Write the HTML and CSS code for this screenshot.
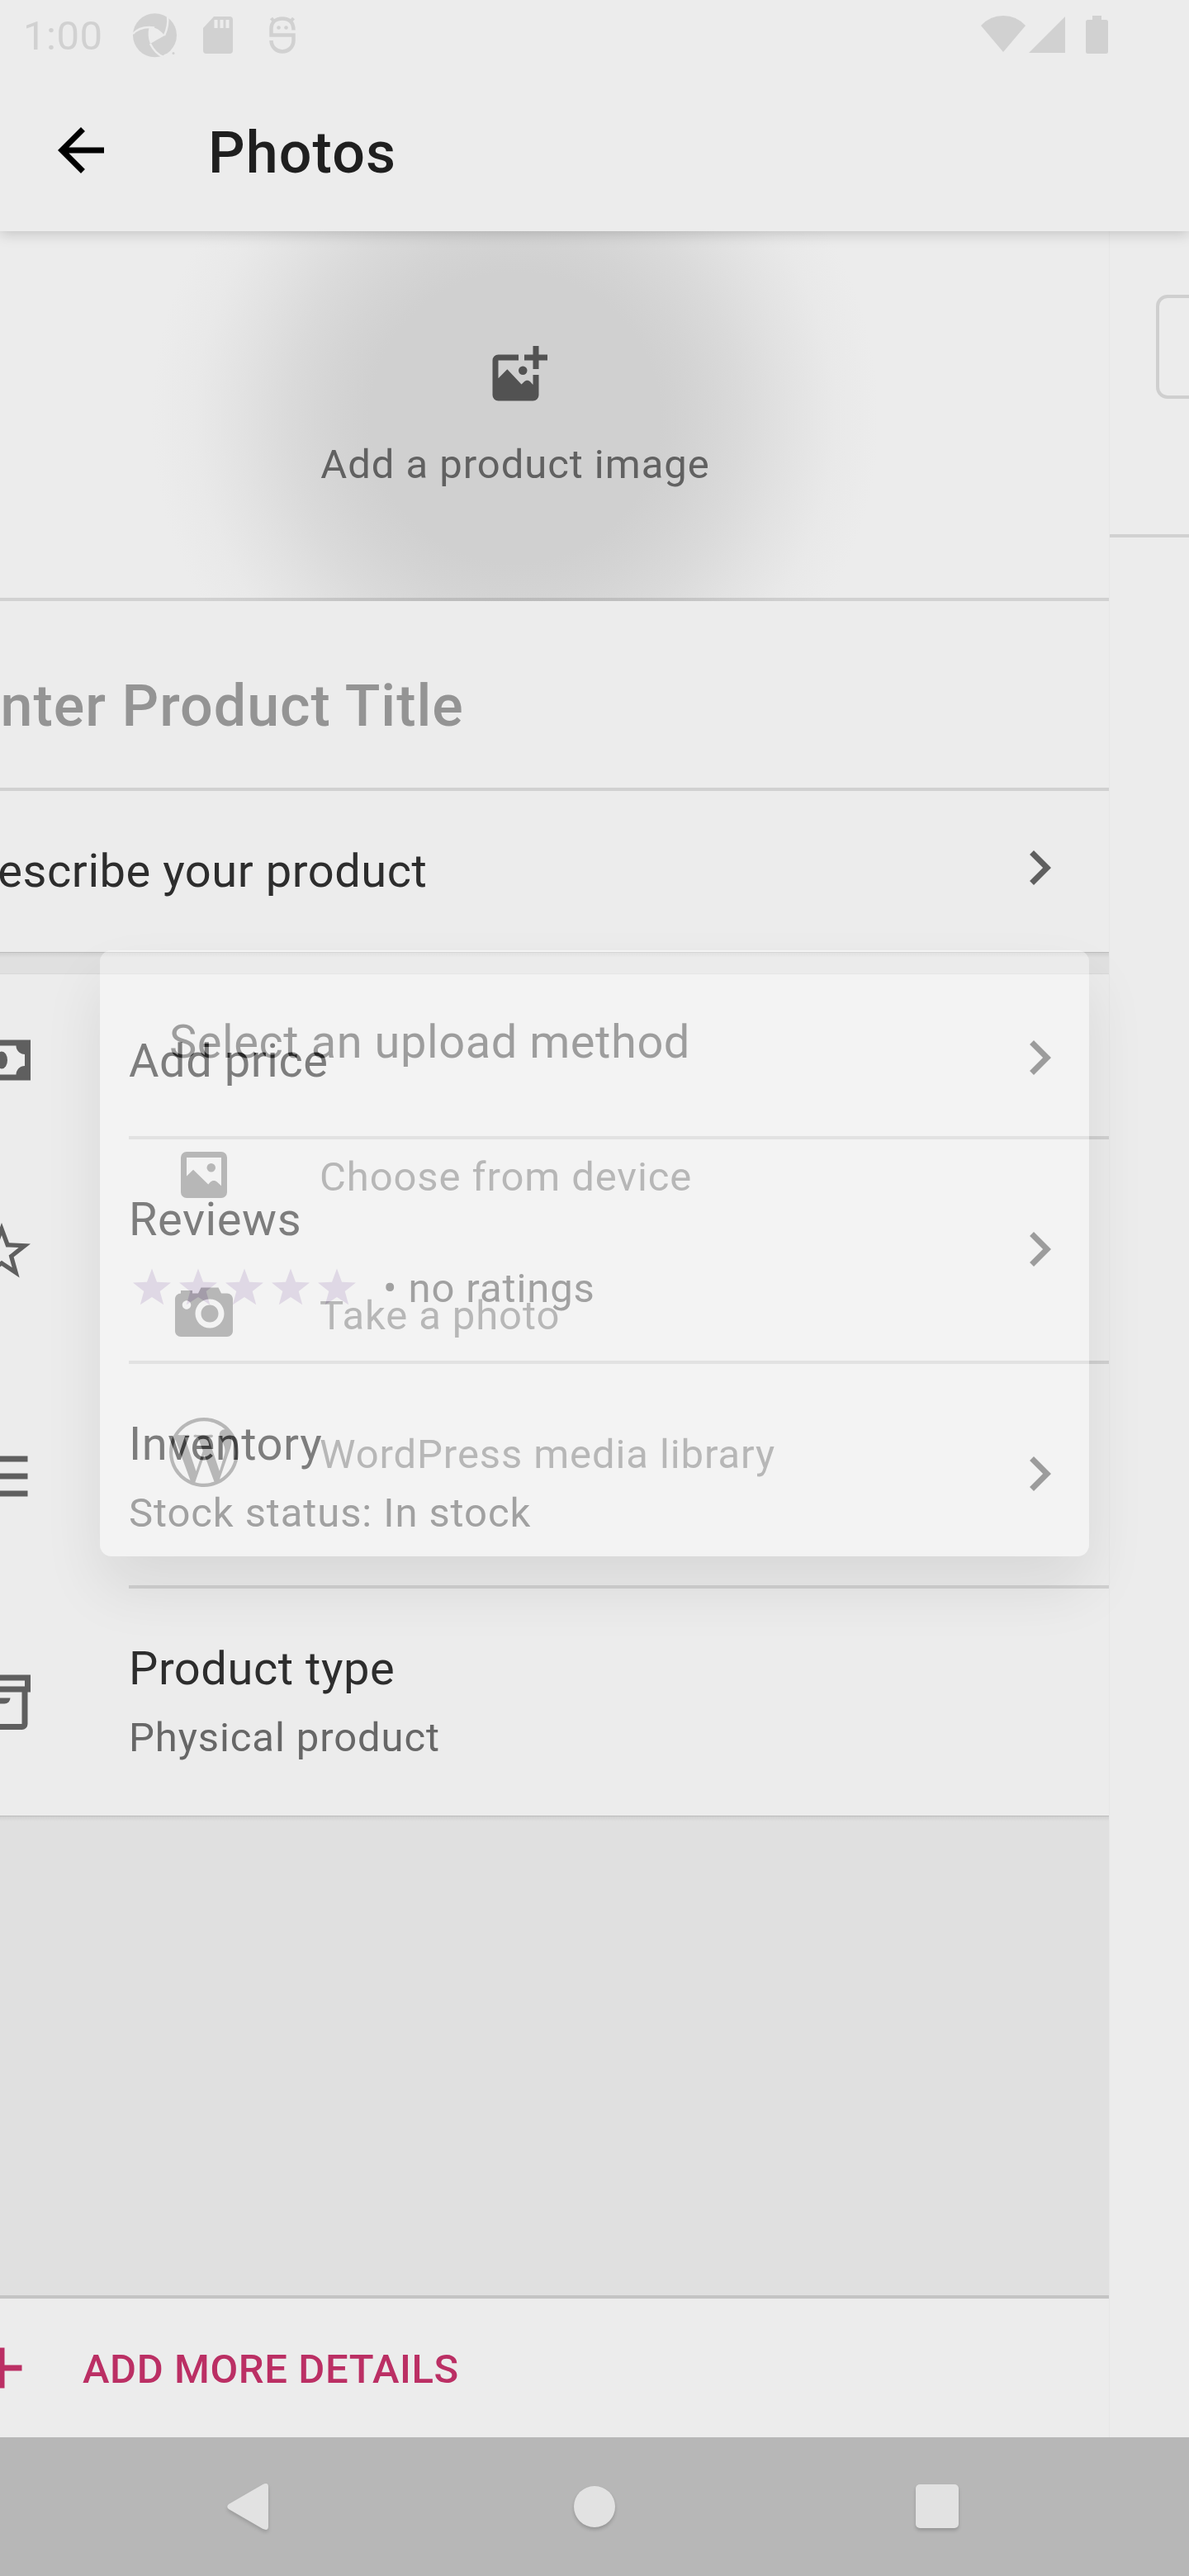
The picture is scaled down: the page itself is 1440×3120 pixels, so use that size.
FILE: index.html
```html
<!DOCTYPE html>
<html lang="en">
<head>
<meta charset="utf-8">
<title>Photos</title>
<link rel="stylesheet" href="styles.css">
</head>
<body>
<div class="screen">
  <header class="top">
    <div class="status">
      <span class="clock">1:00</span>
      <svg class="st-swirl" viewBox="0 0 53 54"><circle cx="26.500" cy="26.700" r="26.500"/><path class="cut" d="M19.500 17.500Q28 14.500 38.500 27Q31 31 21 37Q17 27 19.500 17.500z"/><path class="cut-line" d="M0 25Q9 15 26 17.500M38 27Q43.500 15 42 4M21 37Q27 49 37 53"/><path class="cut" d="M36 55L38 50L44 48L54 40V55z"/><circle cx="49" cy="48.500" r="1.500"/></svg>
      <svg class="st-sd" viewBox="0 0 36 45"><path fill-rule="evenodd" d="M13 0H32Q36 0 36 4V41Q36 45 32 45H4Q0 45 0 41V14zM13.500 4V14H17.500V4zM20.500 4V14H24.500V4zM27.500 4V14H31.500V4z"/></svg>
      <svg class="st-face" viewBox="0 0 32 45"><path class="stroke" d="M29.500 16.500C29.500 7 24 2.500 16 2.500S2.500 7 2.500 15V22.500H29.500V29C29.500 37 23 42.500 16 42.500S2.500 37 2.500 29"/><path class="stroke thin" d="M6 6L2.500 2M26 6L29.500 2"/><circle cx="11.500" cy="13.500" r="2.300"/><circle cx="20.500" cy="13.500" r="2.300"/></svg>
      <svg class="st-wifi" viewBox="0 0 54 44"><path d="M27 44L0 12Q11 0 27 0T54 12z"/></svg>
      <svg class="st-signal" viewBox="0 0 44 44"><path d="M44 0V44H0z"/></svg>
      <svg class="st-battery" viewBox="0 0 27 46"><path d="M8 0H19V5H24.500Q27 5 27 7.500V43.500Q27 46 24.500 46H2.500Q0 46 0 43.500V7.500Q0 5 2.500 5H8z"/></svg>
    </div>
    <div class="toolbar">
      <svg class="icon back" viewBox="0 0 24 24"><path d="M20 11H7.830l5.590-5.590L12 4l-8 8 8 8 1.410-1.410L7.830 13H20v-2z"/></svg>
      <h1 class="title">Photos</h1>
    </div>
  </header>

  <main class="panes">
    <section class="product">
      <div class="photo">
        <svg class="icon add-photo" viewBox="0 0 24 24"><path d="M17 2h2v3h3v2h-3v3h-2V7h-3V5h3z"/><path fill-rule="evenodd" d="M12 5H5a2 2 0 0 0-2 2v12a2 2 0 0 0 2 2h12a2 2 0 0 0 2-2v-7h-2v3.400l-.9-1c-.6-.6-1.600-.6-2.200 0l-.9.900L8.100 10.100 5 13.200V7h7z"/><circle cx="13.500" cy="10.500" r="1.500"/></svg>
        <span class="photo-label">Add a product image</span>
      </div>
      <div class="name">Enter Product Title</div>
      <div class="describe">
        <span class="primary">Describe your product</span>
        <svg class="icon chevron" viewBox="0 0 24 24"><path d="M10 6L8.590 7.410 13.170 12l-4.580 4.590L10 18l6-6z"/></svg>
      </div>
      <div class="band"></div>
      <div class="row price">
        <svg class="icon lead" viewBox="0 0 24 24"><path fill-rule="evenodd" d="M2 5v14h20V5H2zm5 12c0-1.657-1.343-3-3-3v-4c1.657 0 3-1.343 3-3h10c0 1.657 1.343 3 3 3v4c-1.657 0-3 1.343-3 3H7z"/><ellipse cx="12" cy="12" rx="2" ry="3"/></svg>
        <div class="body">
          <div class="texts"><span class="primary">Add price</span></div>
          <svg class="icon chevron" viewBox="0 0 24 24"><path d="M10 6L8.590 7.410 13.170 12l-4.580 4.590L10 18l6-6z"/></svg>
        </div>
      </div>
      <div class="row tall">
        <svg class="icon lead" viewBox="0 0 24 24"><path d="M12 6.308l1.176 3.167.347.936.997.042 3.374.140-2.647 2.090-.784.620.270.963.910 3.250-2.813-1.872-.830-.553-.830.552-2.814 1.870.910-3.248.270-.962-.783-.620-2.648-2.092 3.374-.140.996-.040.347-.936L12 6.308M12 2L9.418 8.953 2 9.257l5.822 4.602L5.820 21 12 16.890 18.180 21l-2.002-7.140L22 9.257l-7.418-.305L12 2z"/></svg>
        <div class="body">
          <div class="texts">
            <span class="primary">Reviews</span>
            <div class="rating">
              <svg class="stars" viewBox="0 0 280 56"><defs><path id="star" d="M28 5.500L34 21.700 51 22.400 37.700 33 42.200 49.300 28 40 13.800 49.300 18.300 33 5 22.400 22 21.700z"/></defs><use href="#star"/><use href="#star" x="56"/><use href="#star" x="112"/><use href="#star" x="168"/><use href="#star" x="224"/></svg>
              <span class="secondary">• no ratings</span>
            </div>
          </div>
          <svg class="icon chevron" viewBox="0 0 24 24"><path d="M10 6L8.590 7.410 13.170 12l-4.580 4.590L10 18l6-6z"/></svg>
        </div>
      </div>
      <div class="row tall">
        <svg class="icon lead" viewBox="0 0 24 24"><path d="M3 5h18v2H3zM3 11h18v2H3zM3 17h18v2H3z"/></svg>
        <div class="body">
          <div class="texts"><span class="primary">Inventory</span><span class="secondary">Stock status: In stock</span></div>
          <svg class="icon chevron" viewBox="0 0 24 24"><path d="M10 6L8.590 7.410 13.170 12l-4.580 4.590L10 18l6-6z"/></svg>
        </div>
      </div>
      <div class="row last">
        <svg class="icon lead" viewBox="0 0 24 24"><path fill-rule="evenodd" d="M2 3h20v6h-1v11a2 2 0 0 1-2 2H5a2 2 0 0 1-2-2V9H2zM4 5v2h16V5zM5 9v11h14V9z"/><path d="M9 11h6a2 2 0 0 1-2 2h-2a2 2 0 0 1-2-2z"/></svg>
        <div class="body">
          <div class="texts"><span class="primary">Product type</span><span class="secondary">Physical product</span></div>
        </div>
      </div>
      <div class="band filler"></div>
      <div class="more">
        <svg class="icon" viewBox="0 0 24 24"><path d="M19 13h-6v6h-2v-6H5v-2h6V5h2v6h6v2z"/></svg>
        <span class="more-label">ADD MORE DETAILS</span>
      </div>
    </section>
    <aside class="gallery">
      <div class="gallery-head"><div class="button-outline"></div></div>
    </aside>
  </main>

  <nav class="nav">
    <svg class="nav-back" viewBox="0 0 50 56"><path d="M2 25L43 1.200Q50 -2 50 4V52Q50 58 43 54.800L2 31Q-1.500 28 2 25z"/></svg>
    <div class="nav-home"></div>
    <div class="nav-recent"></div>
  </nav>

  <div class="dialog">
    <h2 class="dialog-title">Select an upload method</h2>
    <div class="option">
      <svg class="icon" viewBox="0 0 24 24"><path fill-rule="evenodd" d="M6 4h12a2 2 0 0 1 2 2v12a2 2 0 0 1-2 2H6a2 2 0 0 1-2-2V6a2 2 0 0 1 2-2zM6 6v6.400l2.300-2.200 5.200 5.100.7-.8c.7-.7 1.700-.7 2.400 0L18 15.800V6z"/><circle cx="14.500" cy="9.500" r="1.500"/></svg>
      <span class="option-label">Choose from device</span>
    </div>
    <div class="option">
      <svg class="icon" viewBox="0 0 24 24"><path fill-rule="evenodd" d="M17 12c0 1.700-1.300 3-3 3s-3-1.300-3-3 1.300-3 3-3 3 1.300 3 3zm5-5v11c0 1.100-.9 2-2 2H4c-1.100 0-2-.9-2-2V7c0-1.100.9-2 2-2V4h4v1h2l1-2h6l1 2h2c1.100 0 2 .9 2 2zM7.500 9c0-.8-.7-1.500-1.500-1.500S4.500 8.200 4.500 9s.7 1.500 1.500 1.500S7.500 9.800 7.500 9zM19 12c0-2.800-2.200-5-5-5s-5 2.200-5 5 2.200 5 5 5 5-2.200 5-5z"/></svg>
      <span class="option-label">Take a photo</span>
    </div>
    <div class="option">
      <svg class="icon" viewBox="0 0 24 24"><path fill-rule="evenodd" d="M21.469 6.825c.84 1.537 1.318 3.300 1.318 5.175 0 3.979-2.156 7.456-5.363 9.325l3.295-9.527c.615-1.540.82-2.771.82-3.864 0-.405-.026-.78-.07-1.110m-7.981.105c.647-.03 1.232-.105 1.232-.105.582-.075.514-.93-.067-.899 0 0-1.755.135-2.880.135-1.064 0-2.850-.15-2.850-.15-.585-.03-.661.855-.075.885 0 0 .54.061 1.125.09l1.680 4.605-2.370 7.080L5.354 6.900c.649-.03 1.234-.1 1.234-.1.585-.075.516-.93-.065-.896 0 0-1.746.138-2.874.138-.2 0-.438-.008-.69-.015C4.911 3.150 8.235 1.215 12 1.215c2.809 0 5.365 1.072 7.286 2.833-.046-.003-.091-.009-.141-.009-1.060 0-1.812.923-1.812 1.914 0 .89.513 1.643 1.060 2.531.411.72.89 1.643.89 2.977 0 .915-.354 1.994-.821 3.479l-1.075 3.585-3.900-11.610.001.014zM12 22.784c-1.059 0-2.081-.153-3.048-.437l3.237-9.406 3.315 9.087c.024.053.05.101.078.149-1.120.393-2.325.609-3.582.609M1.211 12c0-1.564.336-3.050.935-4.390L7.290 21.709C3.694 19.960 1.212 16.271 1.211 12M12 0C5.385 0 0 5.385 0 12s5.385 12 12 12 12-5.385 12-12S18.615 0 12 0"/></svg>
      <span class="option-label">WordPress media library</span>
    </div>
  </div>
</div>
</body>
</html>
```
FILE: styles.css
```css
* { box-sizing: border-box; }
body { margin: 0; background: #ececec; font-family: Roboto, "Noto Sans", sans-serif; }
svg { display: block; flex: none; overflow: visible; }

.screen { position: relative; width: 1440px; height: 3120px; overflow: hidden; display: flex; flex-direction: column; background: #ececec; }
.icon { width: 84px; height: 84px; fill: #5f5f5f; }

/* Status bar and toolbar */
.top { position: relative; z-index: 1; flex: none; height: 280px; background: #ececec; box-shadow: 0 3px 16px rgba(0, 0, 0, .18); }
.status { display: flex; align-items: flex-start; height: 84px; padding-left: 28px; fill: #d1d1d1; color: #d1d1d1; }
.clock { width: 133px; padding-top: 15px; font-size: 49px; line-height: 58px; letter-spacing: .5px; }
.cut { fill: #ececec; }
.cut-line { fill: none; stroke: #ececec; stroke-width: 2.500; }
.stroke { fill: none; stroke: #d1d1d1; stroke-width: 4.500; }
.thin { stroke-width: 4; }
.st-swirl { width: 53px; height: 54px; margin-top: 16px; }
.st-sd { width: 36px; height: 45px; margin: 20px 0 0 32px; }
.st-face { width: 32px; height: 45px; margin: 20px 0 0 43.500px; }
.st-wifi { width: 54px; height: 44px; margin: 19px 0 0 auto; }
.st-signal { width: 44px; height: 44px; margin: 20px 0 0 4px; }
.st-battery { width: 27px; height: 46px; margin: 19px 98px 0 25px; }
.toolbar { display: flex; align-items: flex-start; height: 196px; padding-left: 56px; }
.back { margin-top: 56px; fill: #000; }
.title { margin: 60px 0 0 112px; font-size: 70px; line-height: 82px; font-weight: 500; letter-spacing: 1.100px; color: #1f1f1f; }

/* Two panes side by side, scrolled mid-transition */
.panes { display: flex; flex: none; height: 2672px; margin-left: -96px; }
.product { flex: none; display: flex; flex-direction: column; width: 1440px; border-right: 1px solid #e7e7e7; }
.gallery { flex: none; width: 1440px; }
.gallery-head { height: 371px; padding: 77px 0 0 56px; border-bottom: 4px solid #d1d1d1; }
.button-outline { height: 126px; border: 4px solid #cfcfcf; border-radius: 14px; }

.photo { display: flex; flex-direction: column; align-items: center; height: 448px; padding: 131.500px 0 0 1px; border-bottom: 4px solid rgba(0, 0, 0, .115);
  background: radial-gradient(circle 440px at 720px 226px, #d0d0d0 0, #d0d0d0 40%, #d4d4d4 50%, #dadada 62%, #e2e2e2 75%, #e9e9e9 88%, #ececec 100%); background-clip: border-box; }
.add-photo { margin-left: 7px; fill: #525252; }
.photo-label { margin-top: 38px; font-size: 49px; line-height: 58px; letter-spacing: .95px; color: #616161; }
.name { height: 230px; padding: 86px 0 0 56px; border-bottom: 4px solid #d1d1d1; font-size: 70px; line-height: 82px; font-weight: 500; letter-spacing: 1px; color: #949494; }
.describe { display: flex; justify-content: space-between; align-items: flex-start; height: 195px; padding: 64px 42px 0 56px; }
.describe .chevron { margin-top: -13px; }
.band { height: 27px; border-top: 1px solid #bdbdbd; border-bottom: 1px solid #d8d8d8; background: linear-gradient(#d0d0d0, #e0e0e0 6px); }
.filler { height: 585px; border-bottom: 4px solid #c4c4c4; }

.row { display: flex; align-items: flex-start; padding-left: 56px; }
.lead { margin-top: 94px; }
.body { display: flex; justify-content: space-between; align-items: flex-start; flex: 1; height: 272px; margin-left: 112px; padding: 64px 42px 0 0; border-bottom: 4px solid #d1d1d1; }
.body .chevron { margin-top: 27px; }
.price .lead { margin-top: 61.500px; }
.price .body { height: 200px; padding-top: 72px; }
.price .chevron { margin-top: -13px; }
.last .body { height: 275px; border-bottom: 0; }
.texts { display: flex; flex-direction: column; gap: 22px; }
.primary { font-size: 56px; line-height: 66px; letter-spacing: .55px; color: #2d2d2d; }
.secondary { font-size: 49px; line-height: 58px; letter-spacing: .9px; color: #676767; }
.rating { display: flex; align-items: flex-start; height: 58px; }
.stars { width: 280px; height: 56px; margin: -1px 28px 0 0; fill: #ccc0d5; }

.more { display: flex; align-items: flex-start; height: 168px; padding: 42px 0 0 56px; }
.more .icon { fill: #bb2f64; }
.more-label { margin: 15px 0 0 56px; font-size: 49px; line-height: 58px; font-weight: 500; letter-spacing: .6px; color: #bb2f64; }

/* System navigation */
.nav { display: flex; flex: none; align-items: flex-start; height: 168px; position: relative; background: #b7b7b7; }
.nav-back { width: 50px; height: 56px; margin: 56px 0 0 275px; fill: #e2e2e2; filter: drop-shadow(0 3px 2px rgba(0, 0, 0, .15)); }
.nav-home { width: 50px; height: 50px; margin: 59px 0 0 370px; border-radius: 50%; background: #e2e2e2; box-shadow: 0 3px 4px rgba(0, 0, 0, .18); }
.nav-recent { width: 52px; height: 53px; margin: 57px 0 0 364px; border-radius: 5px; background: #e2e2e2; box-shadow: 0 3px 4px rgba(0, 0, 0, .18); }

/* Upload dialog, fading in over the page */
.dialog { position: absolute; left: 121px; top: 1151px; width: 1198px; height: 734px; padding: 78px 84px 42px; border-radius: 14px; background: #fff; opacity: .38; box-shadow: 0 38px 76px rgba(0, 0, 0, .23); }
.dialog-title { margin: 0 0 44px; font-size: 56px; line-height: 66px; font-weight: 400; letter-spacing: .55px; color: #1e1e1e; }
.option { display: flex; align-items: center; gap: 98px; height: 168px; }
.option .icon { fill: #636363; }
.option-label { padding-top: 5px; font-size: 49px; line-height: 58px; letter-spacing: .9px; color: #636363; }
```
